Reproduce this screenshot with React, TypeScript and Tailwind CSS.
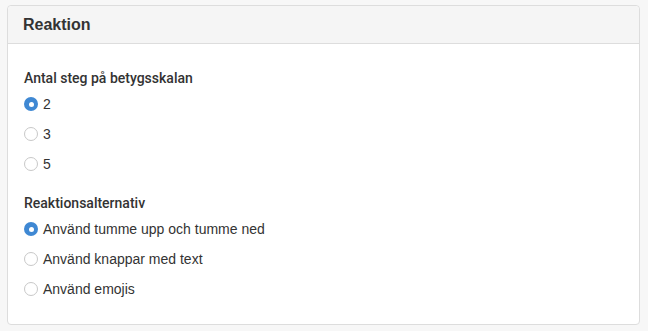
import React from "react";

function Radio({ checked, label }: { checked?: boolean; label: string }) {
  return (
    <div className="flex h-[30px] items-center">
      {checked ? (
        <span className="flex h-[14px] w-[14px] items-center justify-center rounded-full bg-[#3f88d3]">
          <span className="h-[5px] w-[5px] rounded-full bg-white" />
        </span>
      ) : (
        <span className="h-[14px] w-[14px] rounded-full border border-[#c8c8c8] bg-white" />
      )}
      <span className="ml-[5px] text-[14px] leading-[20px] text-[#333]">{label}</span>
    </div>
  );
}

function Label({ children, className = "" }: { children: React.ReactNode; className?: string }) {
  return (
    <div
      className={`mb-[1px] text-[14px] font-medium leading-[20px] text-[#333] ${className}`}
      style={{ fontFamily: 'Roboto, "Liberation Sans", sans-serif' }}
    >
      {children}
    </div>
  );
}

export default function App() {
  return (
    <div
      className="min-h-[331px] w-[648px] bg-[#f7f7f7] pl-[7px] pt-[5px]"
      style={{ fontFamily: '"Liberation Sans", Arial, sans-serif' }}
    >
      <div className="w-[633px] rounded-[4px] border border-[#dddddd] bg-white">
        <div className="flex h-[38px] items-center rounded-t-[4px] border-b border-[#dddddd] bg-[#f5f5f5] px-[15px]">
          <span className="text-[16px] font-bold text-[#333]">Reaktion</span>
        </div>
        <div className="px-[16px] pb-[20px] pt-[24px]">
          <Label>Antal steg på betygsskalan</Label>
          <Radio checked label="2" />
          <Radio label="3" />
          <Radio label="5" />
          <Label className="mt-[14px]">Reaktionsalternativ</Label>
          <Radio checked label="Använd tumme upp och tumme ned" />
          <Radio label="Använd knappar med text" />
          <Radio label="Använd emojis" />
        </div>
      </div>
    </div>
  );
}
